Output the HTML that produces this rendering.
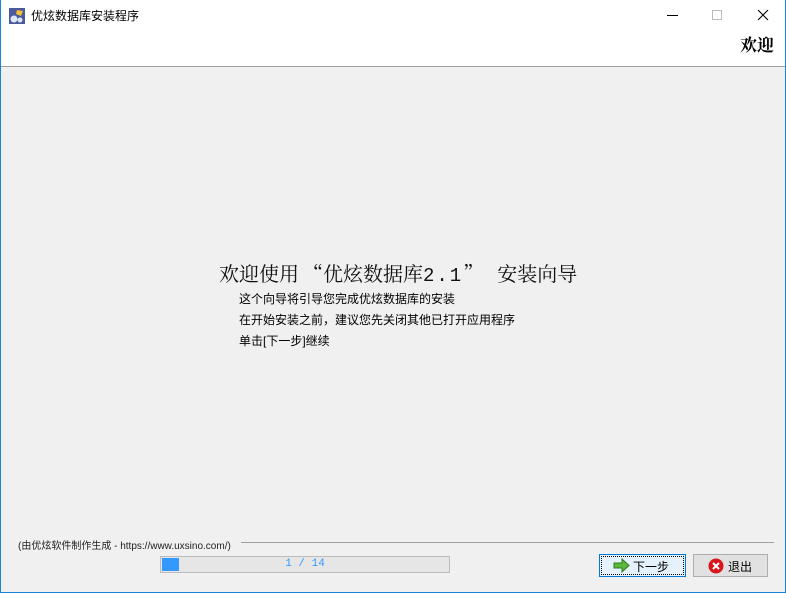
<!DOCTYPE html>
<html><head><meta charset="utf-8"><style>
*{margin:0;padding:0;box-sizing:border-box}
body{width:786px;height:593px;overflow:hidden;background:#f0f0f0;font-family:"Liberation Sans","Noto Sans CJK SC",sans-serif;position:relative}
.win{position:absolute;left:0;top:0;width:786px;height:593px;border:1px solid #1883d7;border-top:none;background:#f0f0f0}
.head{position:absolute;left:0;top:0;width:784px;height:67px;background:#fff;border-bottom:1px solid #a0a0a0}
.t{position:absolute;font-size:12px;color:#000;white-space:nowrap}
</style></head><body>
<div class="win">
<div class="head">
 <svg style="position:absolute;left:8px;top:8px" width="16" height="16"><rect width="16" height="16" fill="#4a5a9a"/><circle cx="5" cy="11" r="3.5" fill="#dfe6f5"/><circle cx="11" cy="12" r="2.5" fill="#dfe6f5"/><path d="M8 2l6 1-2 5-5-2z" fill="#f2c030"/></svg>
 <div class="t" style="left:30px;top:7px;font-size:12px">优炫数据库安装程序</div>
 <div style="position:absolute;left:666px;top:15px;width:11px;height:1px;background:#000"></div>
 <div style="position:absolute;left:711px;top:10px;width:10px;height:10px;border:1px solid #bbb"></div>
 <svg style="position:absolute;left:756px;top:9px" width="12" height="12"><path d="M1 1L11 11M11 1L1 11" stroke="#000" stroke-width="1.1"/></svg>
 <div class="t" style="left:739px;top:31px;font-size:17px;font-weight:bold;font-family:'Noto Serif CJK SC',serif">欢迎</div>
</div>
<div class="t" style="left:218px;top:258px;font-size:20px;font-family:'Noto Serif CJK SC',serif;color:#111">欢迎使用<span style="display:inline-block;width:4px"></span>“优炫数据库<span style="font-family:'Liberation Mono',monospace;font-size:19px;letter-spacing:2px">2.1</span>”<span style="display:inline-block;width:14px"></span>安装向导</div>
<div class="t" style="left:238px;top:290px">这个向导将引导您完成优炫数据库的安装</div>
<div class="t" style="left:238px;top:311px">在开始安装之前，建议您先关闭其他已打开应用程序</div>
<div class="t" style="left:238px;top:332px">单击[下一步]继续</div>
<div class="t" style="left:17px;top:537px;font-size:10px;color:#222">(由优炫软件制作生成 - https://www.uxsino.com/)</div>
<div style="position:absolute;left:240px;top:542px;width:533px;height:1px;background:#a0a0a0"></div>
<div style="position:absolute;left:159px;top:556px;width:290px;height:17px;background:#e6e6e6;border:1px solid #bcbcbc">
 <div style="position:absolute;left:1px;top:1px;width:17px;height:13px;background:#3399ff"></div>
 <div style="position:absolute;left:0;top:1px;width:100%;text-align:center;font-size:11px;color:#3399ff;font-family:'Liberation Mono',monospace">1 / 14</div>
</div>
<div style="position:absolute;left:598px;top:554px;width:87px;height:23px;background:#e5f1fb;border:1px solid #0078d7">
 <div style="position:absolute;inset:1px;border:1px dotted #000"></div>
 <svg style="position:absolute;left:13px;top:3px" width="17" height="15"><path d="M1 5h8V1l7 6.5-7 6.5V10H1z" fill="#5cb83a" stroke="#2f7a1e"/></svg>
 <div class="t" style="left:33px;top:3px">下一步</div>
</div>
<div style="position:absolute;left:692px;top:554px;width:75px;height:23px;background:#e1e1e1;border:1px solid #adadad">
 <svg style="position:absolute;left:14px;top:3px" width="16" height="16"><circle cx="8" cy="8" r="7.5" fill="#d8161b"/><path d="M5 5l6 6M11 5l-6 6" stroke="#fff" stroke-width="2"/></svg>
 <div class="t" style="left:34px;top:3px">退出</div>
</div>
</div>
</body></html>
